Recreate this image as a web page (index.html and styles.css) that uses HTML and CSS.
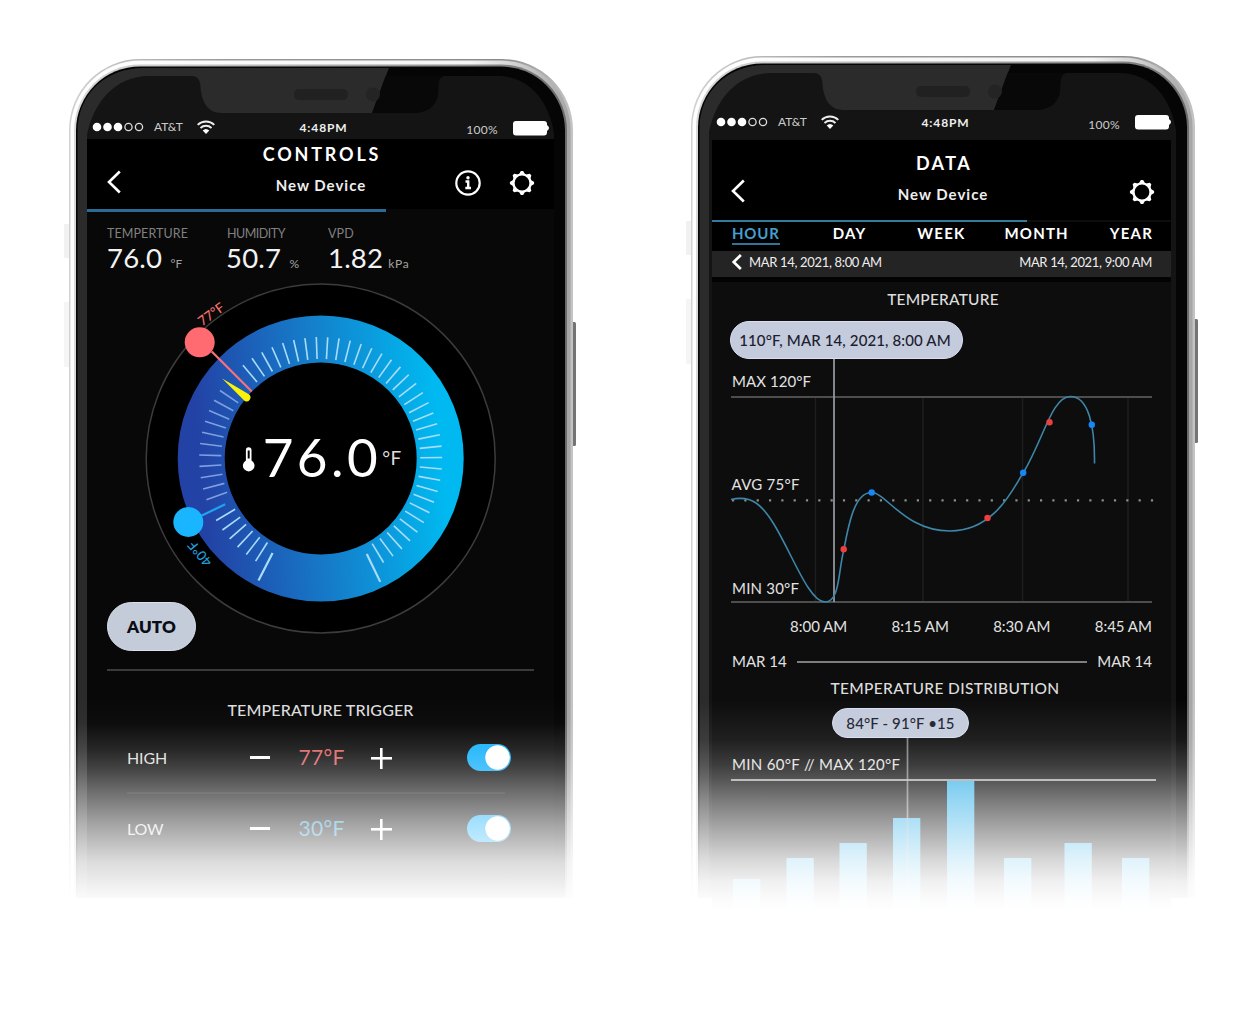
FILE: index.html
```html
<!DOCTYPE html>
<html lang="en">
<head>
    <meta charset="UTF-8">
    <meta name="viewport" content="width=device-width, initial-scale=1.0">
    <title>Controls and Data</title>
    <link rel="stylesheet" href="styles.css">
</head>
<body>
    <!-- Shared icons and phone frame -->
    <svg class="defs" width="0" height="0">
        <defs>
            <linearGradient id="edgeOuter"><stop offset="0" stop-color="#d2d2d2"/><stop offset=".3" stop-color="#9a9a9a"/><stop offset=".85" stop-color="#8a8a8a"/><stop offset="1" stop-color="#c4c4c4"/></linearGradient>
            <linearGradient id="edgeMid"><stop offset="0" stop-color="#ffffff"/><stop offset=".8" stop-color="#f4f4f4"/><stop offset="1" stop-color="#a5a5a5"/></linearGradient>
            <linearGradient id="edgeInner"><stop offset="0" stop-color="#d8d8d8"/><stop offset=".8" stop-color="#8e8e8e"/><stop offset="1" stop-color="#6a6a6a"/></linearGradient>
            <linearGradient id="ringFill" x1="0" y1=".55" x2="1" y2=".45"><stop offset="0" stop-color="#2342a6"/><stop offset=".5" stop-color="#157dca"/><stop offset="1" stop-color="#00b9f0"/></linearGradient>
            <clipPath id="bezelClip"><rect x="7" y="7.500" width="489" height="900" rx="64"/></clipPath>
            <clipPath id="glassClip"><path d="M18 900V76C24 44 46 17 80 17H428C462 17 480 44 485 74V900Z"/></clipPath>
        </defs>
        <symbol id="frame" viewBox="-6 0 516 842">
            <rect x="-5" y="165" width="6" height="34" rx="1" fill="#f1f1f1"/>
            <rect x="-5" y="243" width="6" height="65" rx="1" fill="#f5f5f5"/>
            <rect x="502" y="263" width="5" height="124" rx="1.500" fill="#747474"/>
            <rect x="0" y="0" width="504" height="920" rx="71" fill="url(#edgeOuter)"/>
            <rect x="1.500" y="1.500" width="500" height="920" rx="70" fill="url(#edgeMid)"/>
            <rect x="5" y="5.500" width="493" height="920" rx="66" fill="url(#edgeInner)"/>
            <g clip-path="url(#bezelClip)">
                <rect x="0" y="0" width="504" height="920" fill="#050505"/>
                <path d="M8.500 920V72C9 34 38 9 74 9H320L303 53L250 200V920Z" fill="#2b2b2b"/>
            </g>
            <g clip-path="url(#glassClip)">
                <rect x="18" y="17" width="468" height="903" fill="#141414"/>
                <path d="M123 10V17C132 18 131 24 132 33C134 45 140 54 152 54H303L320 8Z" fill="#2b2b2b"/>
                <path d="M320 8L303 54H344C360 54 367 46 369 36C370 26 368 20 375 17V8Z" fill="#080808"/>
            </g>
            <rect x="225" y="30" width="54" height="11" rx="5" fill="#212121"/>
            <circle cx="304" cy="35.500" r="7" fill="#242424"/>
        </symbol>
        <symbol id="signal" viewBox="0 0 52 10">
            <circle cx="5" cy="5" r="4.300" fill="#fff"/><circle cx="15.500" cy="5" r="4.300" fill="#fff"/><circle cx="26" cy="5" r="4.300" fill="#fff"/>
            <g fill="none" stroke="#ddd" stroke-width="1.300"><circle cx="36.500" cy="5" r="3.600"/><circle cx="47" cy="5" r="3.600"/></g>
        </symbol>
        <symbol id="wifi" viewBox="0 0 18 14">
            <g fill="none" stroke="#eee" stroke-width="1.900"><path d="M.7 4.900A12 12 0 0 1 17.300 4.900"/><path d="M3.500 8A8 8 0 0 1 14.500 8"/></g>
            <path d="M9 14L5.700 10.600A4.800 4.800 0 0 1 12.300 10.600Z" fill="#fff"/>
        </symbol>
        <symbol id="battery" viewBox="0 0 36 15">
            <rect x="0" y="0" width="34" height="14.500" rx="3" fill="#fff"/>
            <path d="M34 4Q38 7 34 10Z" fill="#fff"/>
        </symbol>
        <symbol id="back" viewBox="0 0 14 24">
            <path d="M12.800 1.500L2 12L12.800 22.500" fill="none" stroke="#fff"/>
        </symbol>
        <symbol id="info" viewBox="0 0 26 26">
            <circle cx="13" cy="13" r="11.700" fill="none" stroke="#fff" stroke-width="2.200"/>
            <circle cx="13" cy="7.800" r="1.700" fill="#fff"/>
            <path d="M10.500 11.500H13.200V18M10.300 18H16" fill="none" stroke="#fff" stroke-width="2.400"/>
        </symbol>
        <symbol id="gear" viewBox="0 0 26 26">
            <circle cx="13" cy="13" r="8.600" fill="none" stroke="#fff" stroke-width="2.400"/>
            <g fill="#fff" stroke="#fff" stroke-width="1.200" stroke-linejoin="round">
                <path id="tooth" d="M10.800 4L12.200 1.500H13.800L15.200 4Z"/>
                <use href="#tooth" transform="rotate(45 13 13)"/><use href="#tooth" transform="rotate(90 13 13)"/><use href="#tooth" transform="rotate(135 13 13)"/>
                <use href="#tooth" transform="rotate(180 13 13)"/><use href="#tooth" transform="rotate(225 13 13)"/><use href="#tooth" transform="rotate(270 13 13)"/><use href="#tooth" transform="rotate(315 13 13)"/>
            </g>
        </symbol>
    </svg>

    <!-- Controls screen -->
    <section class="phone controls">
        <svg class="frame"><use href="#frame"/></svg>
        <div class="screen">
            <div class="status-bar">
                <div class="carrier">
                    <svg class="signal"><use href="#signal"/></svg>
                    <span>AT&amp;T</span>
                    <svg class="wifi"><use href="#wifi"/></svg>
                </div>
                <div class="time">4:48PM</div>
                <div class="power">
                    <span>100%</span>
                    <svg class="battery"><use href="#battery"/></svg>
                </div>
            </div>
            <header class="header">
                <svg class="back"><use href="#back"/></svg>
                <div class="titles">
                    <h1>CONTROLS</h1>
                    <h2>New Device</h2>
                </div>
                <div class="actions">
                    <svg class="icon"><use href="#info"/></svg>
                    <svg class="icon"><use href="#gear"/></svg>
                </div>
            </header>
            <div class="content">
                <div class="progress"></div>
                <div class="readings">
                    <div class="reading temp">
                        <div class="label">TEMPERTURE</div>
                        <div class="value">76.0 <small>°F</small></div>
                    </div>
                    <div class="reading humidity">
                        <div class="label">HUMIDITY</div>
                        <div class="value">50.7 <small>%</small></div>
                    </div>
                    <div class="reading vpd">
                        <div class="label">VPD</div>
                        <div class="value">1.82<small>kPa</small></div>
                    </div>
                </div>
                <div class="dial">
                    <svg class="dial-svg" viewBox="-233.700 -187.500 467 380">
                        <circle r="174.500" fill="#000" stroke="#3c3c3c" stroke-width="1.500"/>
                        <circle r="119.500" fill="none" stroke="url(#ringFill)" stroke-width="47"/>
                        <g id="ticks" stroke-width="1.600"></g>
                        <line x1="-109" y1="-107" x2="-69" y2="-67" stroke="#f9707a" stroke-width="2.200"/>
                        <circle cx="-121" cy="-116.200" r="15" fill="#ff6b70"/>
                        <path d="M-98.500 -80L-71.500 -64A4 4 0 0 1 -76 -57.500Z" fill="#fbf20a"/>
                        <line x1="-132.400" y1="63.500" x2="-95.500" y2="45.800" stroke="#1fa4f0" stroke-width="2.200"/>
                        <circle cx="-132.400" cy="63.500" r="15" fill="#19b5fe"/>
                        <text class="mark high" transform="translate(-118.500 -132) rotate(-36)">77°F</text>
                        <text class="mark low" transform="translate(-108 103) rotate(-130)">40°F</text>
                        <path d="M-74.800 -8.500a2.800 2.800 0 0 1 5.600 0V2a5.800 5.800 0 1 1 -5.600 0Z" fill="#fff"/>
                        <path d="M-72 -8V0" stroke="#000" stroke-width="2"/>
                        <text class="big" x="-58" y="18" textLength="115">76.0</text>
                        <text class="unit" x="61.500" y="6.500" textLength="19">°F</text>
                    </svg>
                    <button class="auto">AUTO</button>
                </div>
                <div class="triggers">
                    <h3>TEMPERATURE TRIGGER</h3>
                    <div class="trigger">
                        <span class="name">HIGH</span>
                        <div class="stepper">
                            <i class="minus"></i>
                            <span class="amount high">77°F</span>
                            <i class="plus"></i>
                        </div>
                        <div class="toggle"></div>
                    </div>
                    <div class="trigger">
                        <span class="name">LOW</span>
                        <div class="stepper">
                            <i class="minus"></i>
                            <span class="amount low">30°F</span>
                            <i class="plus"></i>
                        </div>
                        <div class="toggle"></div>
                    </div>
                </div>
            </div>
        </div>
        <div class="fade"></div>
    </section>

    <!-- Data screen -->
    <section class="phone data">
        <svg class="frame"><use href="#frame"/></svg>
        <div class="screen">
            <div class="status-bar">
                <div class="carrier">
                    <svg class="signal"><use href="#signal"/></svg>
                    <span>AT&amp;T</span>
                    <svg class="wifi"><use href="#wifi"/></svg>
                </div>
                <div class="time">4:48PM</div>
                <div class="power">
                    <span>100%</span>
                    <svg class="battery"><use href="#battery"/></svg>
                </div>
            </div>
            <header class="header">
                <svg class="back"><use href="#back"/></svg>
                <div class="titles">
                    <h1>DATA</h1>
                    <h2>New Device</h2>
                </div>
                <div class="actions">
                    <svg class="icon"><use href="#gear"/></svg>
                </div>
            </header>
            <div class="content">
                <div class="progress"></div>
                <nav class="tabs">
                    <span class="tab active">HOUR</span>
                    <span class="tab day">DAY</span>
                    <span class="tab week">WEEK</span>
                    <span class="tab month">MONTH</span>
                    <span class="tab year">YEAR</span>
                </nav>
                <div class="range">
                    <svg class="prev"><use href="#back"/></svg>
                    <span>MAR 14, 2021, 8:00 AM</span>
                    <span class="to">MAR 14, 2021, 9:00 AM</span>
                </div>
                <h3>TEMPERATURE</h3>
                <div class="chart">
                    <svg class="line-chart" viewBox="712 320 459 290">
                        <g stroke="#1e1e1e" stroke-width="1.500">
                            <path d="M815.500 398V601M923 398V601M1022.500 398V601M1128 398V601"/>
                        </g>
                        <path d="M731 397H1152M731 602H1152" stroke="#636363" stroke-width="1.700"/>
                        <path d="M732 500.300H1154" stroke="#8c8c8c" stroke-width="2.200" stroke-dasharray="2.200 10.120"/>
                        <path d="M834 358V602" stroke="#9a9ca5" stroke-width="1.700"/>
                        <path d="M731 499.500C740 497.500 748 497.500 756 503C782 520 804 602 825 602C840 602 838 572 844 549C849 522 855 492.500 871.500 492.500C886 492.500 905 531 950 531C996 531 1014 486 1023.500 472.500C1044 438 1052 396.500 1070.500 396.500C1088 396.500 1095 425 1094.500 463.500" fill="none" stroke="#3d86a8" stroke-width="1.600"/>
                        <g fill="#ee3e3e"><circle cx="843.700" cy="549.300" r="3.200"/><circle cx="987.500" cy="518" r="3.200"/><circle cx="1049.500" cy="422.300" r="3.200"/></g>
                        <g fill="#1687f5"><circle cx="871.700" cy="492.500" r="3.200"/><circle cx="1023.200" cy="472.700" r="3.200"/><circle cx="1091.800" cy="424.700" r="3.200"/></g>
                        <text class="axis" x="732" y="387" textLength="79">MAX 120°F</text>
                        <text class="axis" x="731.500" y="489.500" textLength="68">AVG 75°F</text>
                        <text class="axis" x="732" y="594" textLength="67">MIN 30°F</text>
                    </svg>
                    <div class="pill">110°F, MAR 14, 2021, 8:00 AM</div>
                </div>
                <div class="hours">
                    <span>8:00 AM</span>
                    <span>8:15 AM</span>
                    <span>8:30 AM</span>
                    <span>8:45 AM</span>
                </div>
                <div class="days">
                    <span>MAR 14</span>
                    <i></i>
                    <span>MAR 14</span>
                </div>
                <h3 class="second">TEMPERATURE DISTRIBUTION</h3>
                <div class="chart">
                    <svg class="bar-chart" viewBox="712 708 459 202">
                        <g id="bars" fill="#3fb5ea"></g>
                        <path d="M731 780H1156" stroke="#a2a2a2" stroke-width="2"/>
                        <path d="M907.500 738V895" stroke="#aab0b4" stroke-opacity=".7" stroke-width="1.700"/>
                        <text class="axis" x="732" y="770" textLength="168">MIN 60°F // MAX 120°F</text>
                    </svg>
                    <div class="pill small">84°F - 91°F •15</div>
                </div>
            </div>
        </div>
        <div class="fade"></div>
    </section>

    <script>
        const svgNS = 'http://www.w3.org/2000/svg';

        // Dial ticks, clockwise from lower left
        const ticks = document.getElementById('ticks');
        const tickCount = 57;
        for (let i = 0; i <= tickCount; i++) {
            // covered by the markers and the needle
            if (i === 7 || i === 19 || i === 20) continue;
            const end = i === 0 || i === tickCount;
            const line = document.createElementNS(svgNS, 'line');
            line.setAttribute('y1', end ? -106 : -99.5);
            line.setAttribute('y2', end ? -137 : -121.5);
            line.setAttribute('transform', 'rotate(' + (207 + i * 5.39) + ')');
            line.setAttribute('stroke', i > 7 && i < 19 ? '#7f9fe0' : '#a9dcf9');
            if (end) line.setAttribute('stroke-width', 2.2);
            ticks.appendChild(line);
        }

        // Distribution bars: [x, top]
        const bars = [[733, 879], [786.5, 858], [839.5, 843], [893, 818], [947, 780.5], [1004, 858], [1064.5, 843], [1122, 858]];
        bars.forEach(([x, top]) => {
            const bar = document.createElementNS(svgNS, 'rect');
            bar.setAttribute('x', x);
            bar.setAttribute('y', top);
            bar.setAttribute('width', 27.3);
            bar.setAttribute('height', 910 - top);
            document.getElementById('bars').appendChild(bar);
        });
    </script>
</body>
</html>
```

FILE: styles.css
```css
* {
    box-sizing: border-box;
}

body {
    margin: 0;
    width: 1260px;
    height: 1020px;
    overflow: hidden;
    background: #fff;
    color: #fff;
    font-family: 'Lato', 'Open Sans', sans-serif;
    display: flex;
    align-items: flex-start;
}

h1, h2, h3 {
    margin: 0;
}

svg {
    display: block;
    flex: none;
}

.defs {
    position: absolute;
}

.phone {
    position: relative;
    width: 504px;
    flex: none;
}

.phone.controls {
    height: 839px;
    margin: 59px 0 0 69px;
}

.phone.data {
    height: 854px;
    margin: 56px 0 0 118px;
}

/* Phone body, sits behind the screen */
.frame {
    position: absolute;
    top: 0;
    left: -6px;
    width: 516px;
    height: 842px;
}

.controls .frame {
    clip-path: inset(0 0 3px 0);
}

.screen {
    position: relative;
    width: 467px;
    height: 100%;
    margin-left: 18px;
    overflow: hidden;
}

.data .screen {
    width: 459px;
    margin-left: 21px;
}

/* Status bar */
.status-bar {
    display: grid;
    grid-template-columns: 1fr auto 1fr;
    height: 80px;
    padding: 60px 5px 0 6px;
    font-size: 12px;
    line-height: 16px;
}

.data .status-bar {
    height: 84px;
    padding: 58px 0 0 5px;
}

.carrier {
    display: flex;
    gap: 10px;
    color: #ccc;
}

.carrier span {
    letter-spacing: -0.1px;
}

.signal {
    width: 52px;
    height: 10px;
    margin-top: 3px;
    margin-left: -1px;
}

.wifi {
    width: 18px;
    height: 14px;
    margin-top: 1px;
    margin-left: 4px;
}

.time {
    font-weight: bold;
    letter-spacing: 0.9px;
    margin: 1px -5px 0 0;
    color: #eee;
}

.data .time {
    margin-right: -3px;
}

.power {
    display: flex;
    justify-content: flex-end;
    gap: 15px;
    color: #ccc;
}

.power span {
    margin-top: 3px;
    letter-spacing: 0.3px;
}

.battery {
    width: 36px;
    height: 15px;
    margin-top: 2px;
}

.data .battery {
    margin-top: 1px;
}

/* Header */
.header {
    display: grid;
    grid-template-columns: 1fr auto 1fr;
    height: 70px;
    padding: 3px 19px 0 20px;
    background: #000;
}

.data .header {
    height: 80px;
    padding: 11px 16px 0 19px;
}

.back {
    width: 14px;
    height: 24px;
    margin-top: 28px;
    stroke-width: 2.6;
}

.titles {
    text-align: center;
}

h1 {
    font-size: 18px;
    line-height: 24px;
    letter-spacing: 2.8px;
    margin-right: -2px;
}

.data h1 {
    letter-spacing: 2.4px;
}

h2 {
    font-size: 15px;
    line-height: 24px;
    letter-spacing: 1px;
    margin-top: 7px;
    color: #eee;
}

.actions {
    display: flex;
    justify-content: flex-end;
    gap: 28px;
    margin-top: 28px;
}

.icon {
    width: 26px;
    height: 26px;
}

.content {
    background: #080808;
    height: 690px;
}

.data .content {
    background: #0d0d0d;
}

.progress {
    width: 299px;
    height: 3px;
    background: #2a6c95;
}

.data .progress {
    width: 315px;
    height: 2px;
    background: #347a9f;
}

/* Readings */
.readings {
    display: flex;
    height: 59px;
    padding: 15px 20px 0;
}

.reading.temp {
    width: 119px;
}

.reading.humidity {
    width: 102px;
}

.label {
    font-size: 12.5px;
    line-height: 14px;
    letter-spacing: 0.1px;
    color: #808080;
}

.humidity .label {
    letter-spacing: -0.5px;
    padding-left: 1px;
}

.value {
    font-size: 27.5px;
    line-height: 33px;
    letter-spacing: 0.2px;
    color: #f2f2f2;
    white-space: nowrap;
}

.value small {
    font-size: 12px;
    margin-left: 1px;
    color: #a4a4a4;
}

.vpd .value small {
    margin-left: 5px;
    letter-spacing: 0.7px;
}

/* Dial */
.dial {
    position: relative;
    height: 380px;
}

.dial-svg {
    width: 467px;
    height: 380px;
}

.mark {
    font-size: 13.5px;
    font-weight: 500;
}

.mark.high {
    fill: #f9706f;
}

.mark.low {
    fill: #219fdb;
}

.big {
    font-size: 53px;
    fill: #fff;
}

.unit {
    font-size: 19px;
    fill: #ddd;
}

.auto {
    position: absolute;
    left: 20px;
    bottom: 0;
    width: 89px;
    height: 49px;
    border: 1px solid #dbe0ea;
    border-radius: 25px;
    background: #c4ccd9;
    color: #0b0d14;
    font: 800 17px 'Lato', sans-serif;
    letter-spacing: 0.1px;
}

/* Triggers */
.triggers {
    margin: 18px 20px 0;
    border-top: 2px solid #3b3b3b;
}

h3 {
    font-size: 16px;
    font-weight: 500;
    line-height: 20px;
    text-align: center;
    color: #ddd;
}

.triggers h3 {
    margin-top: 29px;
    margin-bottom: 3px;
    letter-spacing: 0.15px;
}

.trigger {
    display: grid;
    grid-template-columns: 123px 142px 1fr;
    align-items: center;
    height: 69px;
    margin: 0 29px 0 20px;
}

.trigger + .trigger {
    height: 70px;
    border-top: 2px solid #181818;
}

.name {
    font-size: 16px;
    letter-spacing: -0.1px;
    color: #ddd;
}

.stepper {
    display: flex;
    align-items: center;
    justify-content: space-between;
}

.minus {
    width: 20px;
    height: 3px;
    background: #fff;
}

.plus {
    width: 21px;
    height: 21px;
    margin-top: 2px;
    background: linear-gradient(#fff, #fff) center / 21px 2.6px no-repeat, linear-gradient(#fff, #fff) center / 2.6px 21px no-repeat;
}

.amount {
    font-size: 21px;
    letter-spacing: 0.3px;
    margin-left: 2px;
    margin-top: -2px;
}

.amount.high {
    color: #dd5f61;
}

.amount.low {
    color: #2f93c8;
}

.toggle {
    justify-self: end;
    width: 44px;
    height: 27px;
    margin-right: -6px;
    border-radius: 14px;
    background: radial-gradient(circle at 30.5px 13.5px, #fff 11.8px, #12b0fb 12.6px);
}

/* Data screen */
.tabs {
    display: flex;
    height: 29px;
    padding: 2px 18px 0 20px;
    background: #000;
    font-size: 15px;
    font-weight: bold;
    line-height: 18px;
    letter-spacing: 1.2px;
}

.tab.active {
    color: #459fcd;
    border-bottom: 2px solid #2f7398;
    height: 21px;
    letter-spacing: 0.8px;
}

.tab.day {
    margin-left: 53px;
}

.tab.week {
    margin-left: 51px;
}

.tab.month {
    margin-left: 39px;
}

.tab.year {
    margin-left: auto;
}

.range {
    display: flex;
    align-items: center;
    height: 31px;
    padding: 0 19px 5px 20px;
    background: #242424;
    border-bottom: 5px solid #030303;
    font-size: 13px;
    letter-spacing: -0.33px;
    color: #eee;
}

.prev {
    width: 10px;
    height: 16px;
    margin-right: 7px;
    stroke-width: 4;
}

.range .to {
    margin-left: auto;
}

.data h3 {
    margin-top: 7px;
    padding-left: 3px;
    font-size: 15.5px;
    letter-spacing: 0.2px;
    height: 31px;
}

.chart {
    position: relative;
}

.line-chart {
    width: 459px;
    height: 290px;
}

.axis {
    font-size: 15px;
    fill: #e2e2e2;
}

.pill {
    position: absolute;
    top: 1px;
    left: 18px;
    width: 233px;
    height: 38px;
    padding-right: 3px;
    border: 1px solid #d9def0;
    border-radius: 19px;
    background: #c3cbdc;
    color: #1b202e;
    font-size: 15px;
    font-weight: 500;
    line-height: 36px;
    letter-spacing: 0.12px;
    text-align: center;
    white-space: nowrap;
}

.pill.small {
    top: 0;
    left: 120px;
    width: 137px;
    height: 30px;
    padding-right: 0;
    line-height: 28px;
}

.hours {
    display: flex;
    justify-content: space-between;
    height: 41px;
    padding: 6px 19px 0 78px;
    font-size: 15px;
    line-height: 20px;
    color: #e2e2e2;
}

.days {
    display: flex;
    align-items: center;
    gap: 10px;
    height: 20px;
    padding: 0 19px 0 20px;
    font-size: 15px;
    color: #e2e2e2;
}

.days i {
    flex: 1;
    height: 2px;
    margin-top: 1px;
    background: #7e7e7e;
}

.data h3.second {
    height: 30px;
    padding-left: 7px;
    letter-spacing: 0.35px;
}

.bar-chart {
    width: 459px;
    height: 202px;
}

/* Fade to the page background */
.fade {
    position: absolute;
    left: -8px;
    right: -8px;
    bottom: 0;
    height: 200px;
    background: linear-gradient(rgba(255,255,255,0) 0, rgba(255,255,255,.02) 25px, rgba(255,255,255,.13) 52px, rgba(255,255,255,.25) 72px, rgba(255,255,255,.4) 92px, rgba(255,255,255,.64) 127px, rgba(255,255,255,.86) 164px, rgba(255,255,255,.98) 200px);
}

.data .fade {
    height: 210px;
    background: linear-gradient(rgba(255,255,255,0) 0, rgba(255,255,255,.08) 40px, rgba(255,255,255,.2) 65px, rgba(255,255,255,.3) 80px, rgba(255,255,255,.45) 100px, rgba(255,255,255,.65) 130px, rgba(255,255,255,.84) 160px, rgba(255,255,255,.94) 182px, rgba(255,255,255,.98) 198px, #fff 210px);
}
```
